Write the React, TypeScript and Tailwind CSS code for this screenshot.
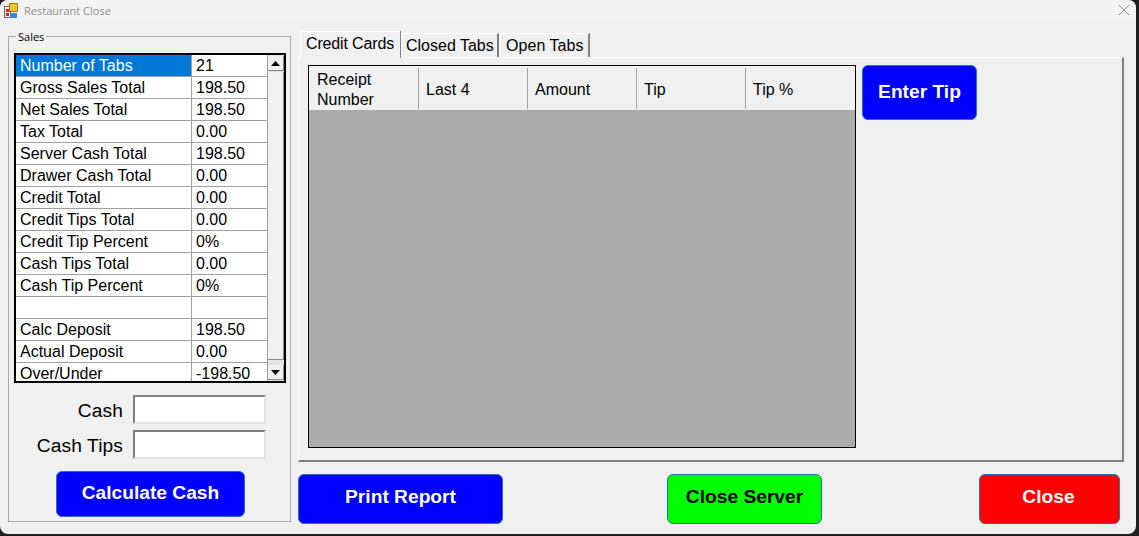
import React from 'react'

const salesRows: [string, string][] = [
    ['Number of Tabs', '21'],
    ['Gross Sales Total', '198.50'],
    ['Net Sales Total', '198.50'],
    ['Tax Total', '0.00'],
    ['Server Cash Total', '198.50'],
    ['Drawer Cash Total', '0.00'],
    ['Credit Total', '0.00'],
    ['Credit Tips Total', '0.00'],
    ['Credit Tip Percent', '0%'],
    ['Cash Tips Total', '0.00'],
    ['Cash Tip Percent', '0%'],
    ['', ''],
    ['Calc Deposit', '198.50'],
    ['Actual Deposit', '0.00'],
    ['Over/Under', '-198.50'],
]

const AppIcon = () => (
    <svg width="14" height="16" viewBox="0 0 14 16" className="shrink-0">
        <rect x="0.5" y="3.5" width="6" height="11" fill="#f2f2f2" stroke="#8a5a50" />
        <rect x="2" y="6" width="3" height="3" fill="#d0241c" />
        <rect x="2" y="10" width="3" height="3" fill="#d0241c" />
        <rect x="5.5" y="0.5" width="8" height="8" fill="#f7c325" stroke="#a07a20" />
        <rect x="6" y="10" width="7" height="5" fill="#3f86e0" />
    </svg>
)

const ScrollArrow = ({ up }: { up?: boolean }) => (
    <div className="flex h-[15px] w-[16px] items-center justify-center border-r border-b border-[#8a8a8a] bg-[#f0f0f0]">
        <svg width="9" height="5" viewBox="0 0 9 5">
            <path d={up ? 'M4.5 0L9 5H0Z' : 'M0 0H9L4.5 5Z'} fill="#000" />
        </svg>
    </div>
)

const Field = ({ label }: { label: string }) => (
    <div className="flex h-[29px] items-center">
        <span className="w-[109px] whitespace-nowrap pt-[2px] text-right text-[19.2px] leading-none tracking-[0.1px] text-black">{label}</span>
        <div className="ml-[10px] h-[29px] w-[133px] border-2 border-t-[#808080] border-l-[#808080] border-r-[#e3e3e3] border-b-[#e3e3e3] bg-white" />
    </div>
)

const ActionButton = ({ label, className }: { label: string; className: string }) => (
    <button className={`rounded-[6px] border border-[#2a6fb0] text-[19.2px] font-bold ${className}`}>
        {label}
    </button>
)

const App = () => {
    return (
        <div className="h-[536px] w-[1139px] overflow-hidden bg-[#1f1f1f] font-['Liberation_Sans',Arial,sans-serif]">
            <div className="flex h-[534px] w-[1136px] flex-col overflow-hidden rounded-[8px] bg-[#f0f0f0]">
                {/* title bar */}
                <div className="flex h-[21px] shrink-0 items-center bg-[#f3f3f3] pl-[4px] pr-[6px]">
                    <AppIcon />
                    <span className="ml-[6px] mt-[1px] font-['Open_Sans',sans-serif] text-[11px] text-[#8e8e8e]">Restaurant Close</span>
                    <svg width="12" height="12" viewBox="0 0 12 12" className="ml-auto mt-[-1px]">
                        <path d="M1 1L11 11M11 1L1 11" stroke="#8c8c8c" strokeWidth="1" />
                    </svg>
                </div>

                <div className="flex flex-1 pl-[8px] pt-[15px]">
                    {/* sales group */}
                    <div className="relative h-[486px] w-[283px] shrink-0 border border-[#a8a8a8] pl-[5px] pt-[16px]">
                        <span className="absolute left-[7px] top-[-7px] bg-[#f0f0f0] px-[2px] font-['Open_Sans',sans-serif] text-[11px] leading-[14px] text-black">
                            Sales
                        </span>

                        <div className="flex h-[330px] w-[272px] overflow-hidden border-2 border-black bg-white">
                            <div className="w-[252px] shrink-0">
                                {salesRows.map(([name, value], i) => (
                                    <div key={i} className="flex h-[22px] border-r border-b border-[#a0a0a0] text-[16px] leading-[21px] text-black">
                                        <div className={`w-[176px] shrink-0 border-r border-[#a0a0a0] pl-[4px] ${i === 0 ? 'bg-[#0078d7] text-white' : ''}`}>
                                            {name}
                                        </div>
                                        <div className="pl-[4px]">{value}</div>
                                    </div>
                                ))}
                            </div>
                            {/* scrollbar */}
                            <div className="flex w-[16px] shrink-0 flex-col bg-[#e4e4e4] pt-[1px]">
                                <ScrollArrow up />
                                <div className="mt-[1px] h-[288px] w-[16px] border-r border-b border-[#8a8a8a] bg-[#f0f0f0]" />
                                <div className="mt-auto mb-[1px]">
                                    <ScrollArrow />
                                </div>
                            </div>
                        </div>

                        <div className="mt-[12px] flex flex-col gap-[6px]">
                            <Field label="Cash" />
                            <Field label="Cash Tips" />
                        </div>

                        <ActionButton label="Calculate Cash" className="ml-[42px] mt-[12px] h-[46px] w-[189px] bg-[#0000ff] pb-[1px] text-white" />
                    </div>

                    {/* right side */}
                    <div className="ml-[7px] w-[826px] shrink-0">
                        <div className="flex h-[21px] items-end pl-[2px] text-[16px] leading-none text-black">
                            <div className="relative z-10 mb-[-1px] flex h-[27px] w-[100px] shrink-0 items-center border-t border-l border-white bg-[#f0f0f0] pl-[5px] pb-[3px] tracking-[-0.15px] shadow-[1px_0_0_#808080]">
                                Credit Cards
                            </div>
                            <div className="ml-[1px] flex h-[24px] w-[98px] shrink-0 items-center border-t border-l border-r-2 border-white border-r-[#808080] pl-[4px]">
                                Closed Tabs
                            </div>
                            <div className="ml-[1px] flex h-[24px] w-[90px] shrink-0 items-center border-t border-l border-r-2 border-white border-r-[#808080] pl-[5px] tracking-[0.05px]">
                                Open Tabs
                            </div>
                        </div>

                        <div className="flex h-[405px] border-t border-l border-r-2 border-b-2 border-white border-r-[#808080] border-b-[#808080] pl-[9px] pt-[7px]">
                            {/* grid */}
                            <div className="flex h-[383px] w-[548px] shrink-0 flex-col border border-black bg-[#ababab]">
                                <div className="flex h-[44px] shrink-0 border-t border-[#f0f0f0] bg-[#f0f0f0] text-[16px] leading-[20px] text-black">
                                    {['Receipt Number', 'Last 4', 'Amount', 'Tip', 'Tip %'].map((col, i) => (
                                        <div
                                            key={col}
                                            className={`my-[1px] flex items-center pt-[2px] ${i === 0 ? 'w-[110px] pl-[8px]' : 'w-[109px] pl-[7px]'} ${i < 4 ? 'border-r border-[#a0a0a0]' : ''}`}
                                        >
                                            <span className={i === 0 ? 'w-[70px]' : ''}>{col}</span>
                                        </div>
                                    ))}
                                </div>
                            </div>
                            <ActionButton label="Enter Tip" className="ml-[6px] h-[55px] w-[115px] bg-[#0000ff] text-white" />
                        </div>

                        <div className="mt-[12px] flex items-start pr-[4px]">
                            <ActionButton label="Print Report" className="h-[50px] w-[205px] bg-[#0000ff] pb-[3px] text-white" />
                            <ActionButton label="Close Server" className="ml-[164px] h-[50px] w-[155px] bg-[#00ff00] pb-[3px] text-black" />
                            <ActionButton label="Close" className="ml-auto h-[50px] w-[141px] bg-[#ff0000] pb-[3px] pr-[2px] text-white" />
                        </div>
                    </div>
                </div>
            </div>
        </div>
    )
}

export default App
